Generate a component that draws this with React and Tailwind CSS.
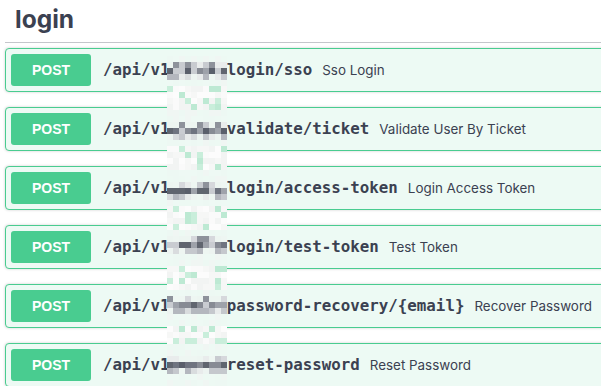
const rows = [
  { path: 'login/sso', summary: 'Sso Login' },
  { path: 'validate/ticket', summary: 'Validate User By Ticket' },
  { path: 'login/access-token', summary: 'Login Access Token' },
  { path: 'login/test-token', summary: 'Test Token' },
  { path: 'password-recovery/{email}', summary: 'Recover Password' },
  { path: 'reset-password', summary: 'Reset Password' },
]

const topBand = ['#e9ecec', '#d6d8dc', '#edf5f1', '#c8cbd0', '#8e929b', '#eef6f2']
const midBand = ['#5a5f6b', '#6f7480', '#878b94', '#9ea2aa', '#c9ccd1', '#60656f']
const lowBand = ['#e8ebeb', '#c5c8cd', '#edf4f1', '#b4b7be', '#eef6f2', '#d9dcde']
const gapCells = ['#bde9d3', '#c9eedb', '#f6f7f6', '#fafafa', '#f2f4f3', '#fcfcfc']
const rowBg = ['#edf8f3', '#eef9f4', '#f0f6f3', '#edf9f3']

function hash(a, b) {
  let h = Math.imul(a + 1, 73856093) ^ Math.imul(b + 7, 19349663)
  h = Math.imul(h ^ (h >>> 13), 0x5bd1e995)
  return (h ^ (h >>> 15)) >>> 0
}

// pixelated column that hides part of each path
function Mosaic() {
  const cells = []
  for (let r = 0; r < 56; r++) {
    const y = 56 + r * 6
    for (let c = 0; c < 10; c++) {
      const local = (y + 3 - 49) % 59
      const h = hash(r, c)
      let fill
      if (local >= 13 && local < 19) fill = topBand[h % topBand.length]
      else if (local >= 19 && local < 25) fill = midBand[h % midBand.length]
      else if (local >= 25 && local < 31) fill = lowBand[h % lowBand.length]
      else if (local >= 40 || local < 3) fill = gapCells[h % gapCells.length]
      else fill = rowBg[h % rowBg.length]
      cells.push(<rect key={r + '-' + c} x={c * 6} y={r * 6} width="6" height="6" fill={fill} />)
    }
  }
  return (
    <svg className="absolute left-[167px] top-[56px]" width="60" height="336" viewBox="0 0 60 336">
      {cells}
    </svg>
  )
}

export default function App() {
  return (
    <div className="relative w-[601px] h-[386px] overflow-hidden bg-white text-[#3b4151]">
      <div className="w-[620px] pl-[5px]">
        <h3 className="flex items-center h-[43px] pl-[10px] pb-[3px] border-b border-[#c4c6cb] mb-[5px] text-[24.5px] font-bold font-['Inter',sans-serif]">
          login
        </h3>
        {rows.map(r => (
          <div key={r.path} className="flex items-center h-[44px] mb-[15px] p-[5px] border border-[#49cc90] bg-[#edfaf4] rounded-[4px] shadow-[0_0_3px_rgba(0,0,0,0.19)]">
            <span className="flex items-center justify-center w-[80px] h-[32px] rounded-[3px] bg-[#49cc90] text-white text-[14px] font-bold font-['Liberation_Sans',sans-serif]">
              POST
            </span>
            <span className="pl-[12px] pr-[10px] text-[15.8px] font-bold font-['DejaVu_Sans_Mono',monospace] whitespace-nowrap">
              /api/v1<span className="inline-block w-[6ch]" />{r.path}
            </span>
            <span className="text-[13.4px] font-['Inter',sans-serif] whitespace-nowrap">{r.summary}</span>
          </div>
        ))}
      </div>
      <Mosaic />
    </div>
  )
}
